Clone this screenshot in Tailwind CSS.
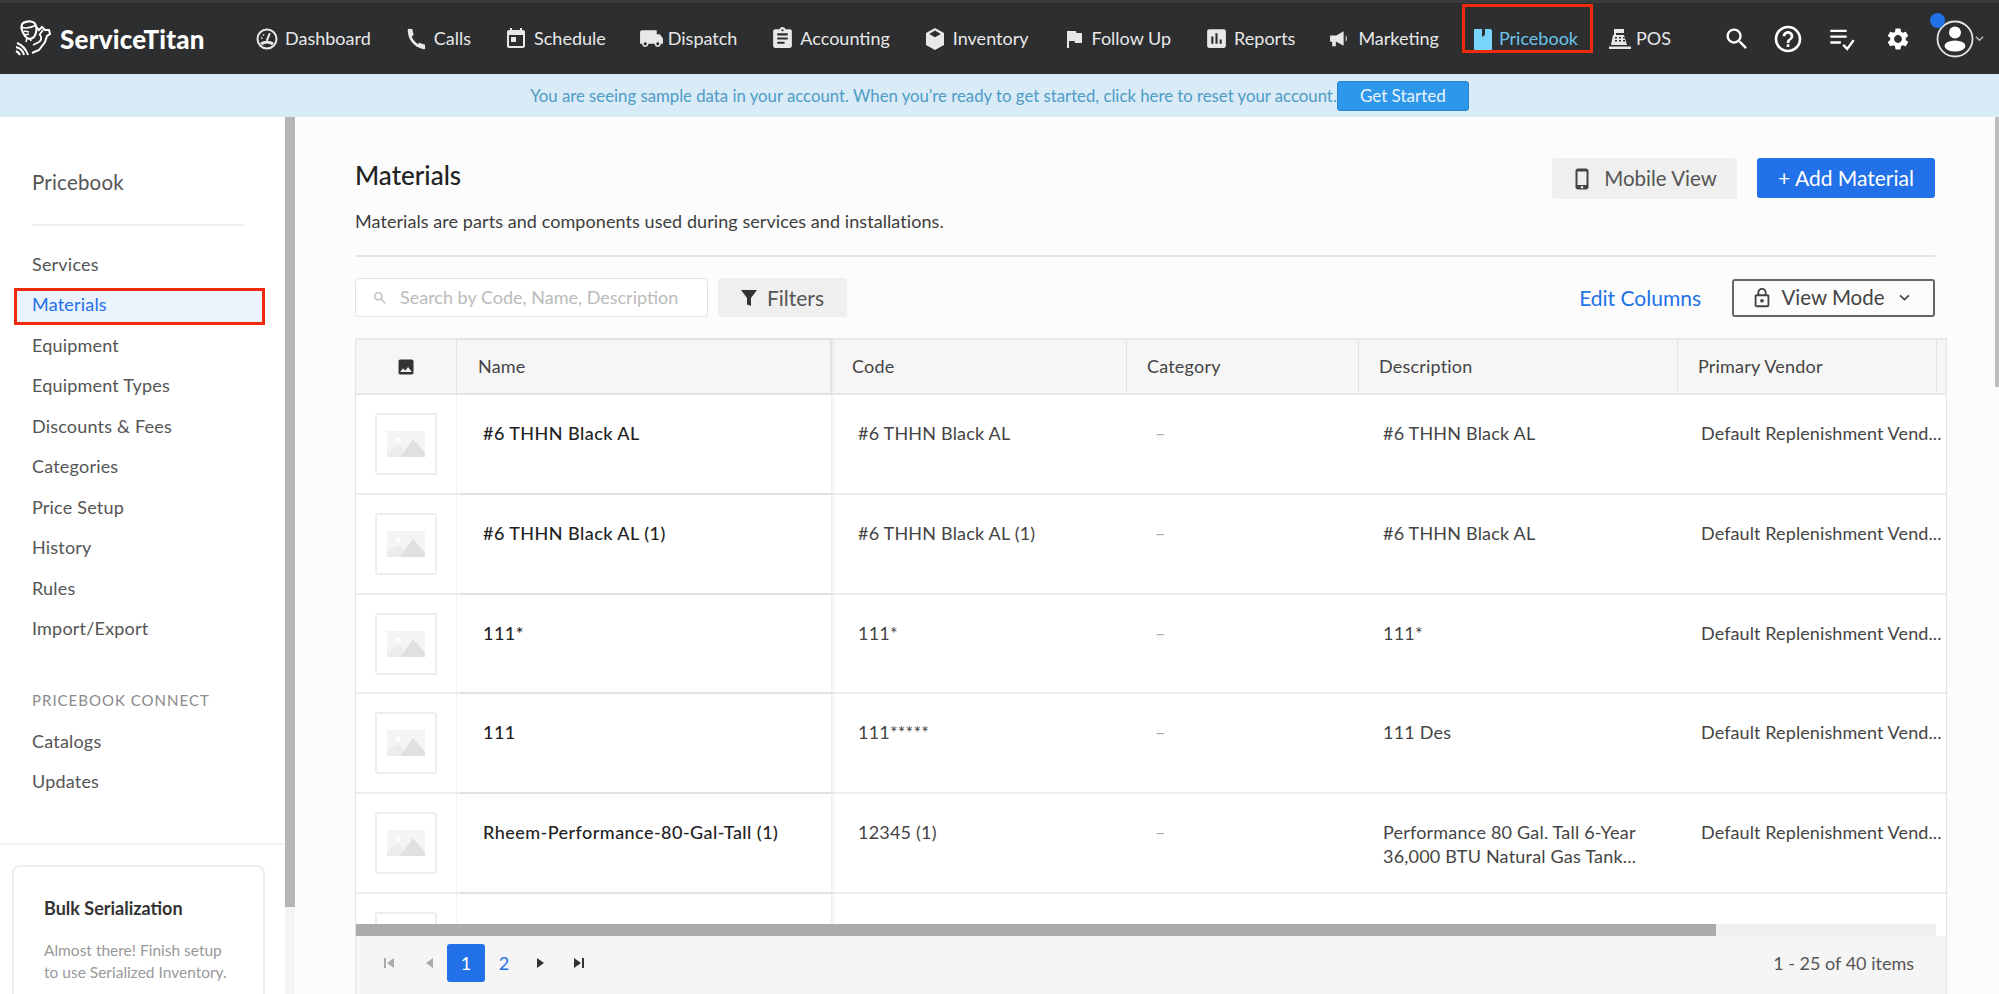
<!DOCTYPE html>
<html lang="en">
<head>
    <meta charset="UTF-8">
    <title>Materials - Pricebook</title>
    <script src="https://cdn.jsdelivr.net/npm/@tailwindcss/browser@4"></script>
</head>
<body class="h-screen overflow-hidden bg-white font-['Lato','Liberation_Sans',sans-serif] text-[#444]">
    <svg class="hidden">
        <symbol id="placeholder" viewBox="0 0 38 26">
            <rect width="38" height="26" fill="#f3f4f4"/>
            <circle cx="11" cy="9" r="2.6" fill="#fff"/>
            <path d="M0 22 10 14l6 4 2 8H0z" fill="#ebecec"/>
            <path d="M13 26 26 8l12 14v4z" fill="#dfe1e1"/>
        </symbol>
    </svg>

    <!-- top nav -->
    <header class="flex h-[74px] items-center border-t-3 border-[#3a3b3d] bg-[#2d2e30] text-[18px] text-[#e8e8e8] shadow-sm">
        <a class="ml-[15px] flex w-[240px] shrink-0 items-center gap-[8px] text-white">
            <svg class="h-[37px] w-[37px]" viewBox="0 0 37 37" fill="none" stroke="#fff" stroke-width="2.200">
                <path d="M8 3c5-3 12-2 13 3 1 3 0 8-2 11-3 3-7 2-9-1-3-4-5-10-2-13z"/>
                <path d="M6 7c5 2 10 1 15-2M9 11l5 1M10 15l4-1M12 18l-1 4M15 18l1 3" stroke-width="1.600"/>
                <path d="m21 7 3 3 3-3 3 3 4 0 1 4-3 2-2 6-6 8-7 3" stroke-width="2"/>
                <path d="M24 14c3 2 3 6 0 8l-6 3M28 10l-3 4" stroke-width="1.800"/>
                <path d="M2 23c5 2 9 6 11 12M1 27c4 1 7 4 8 8M1 31c2 1 3 2 4 4" stroke-width="2"/>
            </svg>
            <span class="text-[26px] leading-none font-black tracking-[0.2px]">ServiceTitan</span>
        </a>
        <nav class="flex items-center gap-[33px]">
            <a class="flex items-center gap-[6px]">
                <svg class="h-[24px] w-[24px]" viewBox="0 0 24 24" fill="none" stroke="currentColor" stroke-width="2"><circle cx="12" cy="12" r="9.5"/><path d="m12 13 2.5-6" stroke-linecap="round"/><path d="M6 17c3.500-2.500 8.500-2.500 12 0" stroke-width="3"/><path d="M6 11h1.500M8 7.500l1 1" stroke-width="1.500"/></svg>
                <span>Dashboard</span>
            </a>
            <a class="flex items-center gap-[6px]">
                <svg class="h-[24px] w-[24px]" viewBox="0 0 24 24" fill="none" stroke="currentColor" stroke-width="2.600" stroke-linecap="round"><path d="M5 3c0 9 6 16 15 18"/><path d="M5 3h2.500l1 4.500L6.500 9.500M20 21v-2.500l-4.500-1.500-2 2" stroke-width="2" fill="currentColor"/></svg>
                <span>Calls</span>
            </a>
            <a class="flex items-center gap-[6px]">
                <svg class="h-[24px] w-[24px]" viewBox="0 0 24 24" fill="currentColor"><path d="M19 3h-1V1h-2v2H8V1H6v2H5c-1.110 0-1.990.9-1.990 2L3 19c0 1.100.89 2 2 2h14c1.100 0 2-.9 2-2V5c0-1.100-.9-2-2-2zm0 16H5V8h14v11zM7 10h5v5H7z"/></svg>
                <span>Schedule</span>
            </a>
            <a class="flex items-center gap-[4px]">
                <svg class="h-[25px] w-[25px]" viewBox="0 0 24 24" fill="currentColor"><path d="M20 8h-3V4H3c-1.100 0-2 .9-2 2v11h2c0 1.660 1.340 3 3 3s3-1.340 3-3h6c0 1.660 1.340 3 3 3s3-1.340 3-3h2v-5l-3-4zM6 18.500c-.83 0-1.500-.67-1.500-1.500s.67-1.500 1.500-1.500 1.500.67 1.500 1.500-.67 1.500-1.500 1.500zm12 0c-.83 0-1.500-.67-1.500-1.500s.67-1.500 1.500-1.500 1.500.67 1.500 1.500-.67 1.500-1.500 1.500z"/></svg>
                <span>Dispatch</span>
            </a>
            <a class="flex items-center gap-[5px]">
                <svg class="h-[25px] w-[25px]" viewBox="0 0 24 24" fill="currentColor"><path d="M19 3h-4.180C14.400 1.840 13.300 1 12 1c-1.300 0-2.400.84-2.820 2H5c-1.100 0-2 .9-2 2v14c0 1.100.9 2 2 2h14c1.100 0 2-.9 2-2V5c0-1.100-.9-2-2-2zm-7 0c.55 0 1 .45 1 1s-.45 1-1 1-1-.45-1-1 .45-1 1-1zm2 14H7v-2h7v2zm3-4H7v-2h10v2zm0-4H7V7h10v2z"/></svg>
                <span>Accounting</span>
            </a>
            <a class="flex items-center gap-[6px]">
                <svg class="h-[24px] w-[24px]" viewBox="0 0 24 24" fill="currentColor"><path d="M12 1 3 6v12l9 5 9-5V6zm0 2.600L17.800 7 12 10.300 6.200 7z"/></svg>
                <span>Inventory</span>
            </a>
            <a class="flex items-center gap-[6px]">
                <svg class="h-[24px] w-[24px]" viewBox="0 0 24 24" fill="currentColor"><path d="M14.400 6 14 4H5v17h2v-7h5.600l.4 2h7V6z"/></svg>
                <span>Follow Up</span>
            </a>
            <a class="flex items-center gap-[5px]">
                <svg class="h-[25px] w-[25px]" viewBox="0 0 24 24" fill="currentColor"><path d="M19 3H5c-1.100 0-2 .9-2 2v14c0 1.100.9 2 2 2h14c1.100 0 2-.9 2-2V5c0-1.100-.9-2-2-2zM9 17H7v-7h2v7zm4 0h-2V7h2v10zm4 0h-2v-4h2v4z"/></svg>
                <span>Reports</span>
            </a>
            <a class="flex items-center gap-[5px]">
                <svg class="h-[25px] w-[25px]" viewBox="0 0 24 24" fill="currentColor"><path d="M2 9h6l7-4v14l-7-4H7.500v4.500H4V15H2z"/><path d="M17 9c1.500 1 1.500 5 0 6z"/></svg>
                <span>Marketing</span>
            </a>
            <a class="relative ml-[2px] flex items-center gap-[7px] text-[#6cc3ea]">
                <svg class="h-[24px] w-[18px]" viewBox="0 0 18 24" fill="#78d4fb"><path d="M1 2h7v8l3-2V2h5c1 0 2 1 2 2v18c0 1-1 1-2 1H2c-1 0-2 0-2-1V3c0-1 0-1 1-1z"/></svg>
                <span>Pricebook</span>
                <div class="absolute top-[-21px] left-[-12px] h-[49px] w-[131px] border-3 border-[#f02a0c]"></div>
            </a>
            <a class="-ml-[3px] flex items-center gap-[4px]">
                <svg class="h-[24px] w-[24px]" viewBox="0 0 24 24" fill="currentColor"><path d="M6 2h10v4H8v2h8l3 10H3L5 8h1zM7 10v1.500h2V10zm4 0v1.500h2V10zm4 0v1.500h2V10zM7 13v1.500h2V13zm4 0v1.500h2V13zm4 0v1.500h2V13zM1 19.500h22V22H1z"/></svg>
                <span>POS</span>
            </a>
        </nav>
        <div class="ml-auto flex items-center pr-[15px] text-white">
            <svg class="h-[28px] w-[28px]" viewBox="0 0 24 24" fill="currentColor"><path d="M15.500 14h-.79l-.28-.27C15.410 12.590 16 11.110 16 9.500 16 5.910 13.090 3 9.500 3S3 5.910 3 9.500 5.910 16 9.500 16c1.610 0 3.090-.59 4.230-1.570l.27.28v.79l5 4.990L20.490 19l-4.990-5zm-6 0C7.010 14 5 11.990 5 9.500S7.010 5 9.500 5 14 7.010 14 9.500 11.990 14 9.500 14z"/></svg>
            <svg class="ml-[21px] h-[32px] w-[32px]" viewBox="0 0 24 24" fill="currentColor"><path d="M11 18h2v-2h-2v2zm1-16C6.480 2 2 6.480 2 12s4.480 10 10 10 10-4.480 10-10S17.520 2 12 2zm0 18c-4.410 0-8-3.590-8-8s3.590-8 8-8 8 3.590 8 8-3.590 8-8 8zm0-14c-2.210 0-4 1.790-4 4h2c0-1.100.9-2 2-2s2 .9 2 2c0 2-3 1.750-3 5h2c0-2.250 3-2.500 3-5 0-2.210-1.790-4-4-4z"/></svg>
            <svg class="ml-[24px] h-[28px] w-[28px]" viewBox="0 0 24 24" fill="none" stroke="currentColor" stroke-width="2"><path d="M2 5h14M2 10h14M2 15h9M13 17l3.500 3.500L22 13"/></svg>
            <svg class="ml-[29px] h-[26px] w-[26px]" viewBox="0 0 24 24" fill="currentColor"><path d="M19.140 12.940c.04-.3.06-.61.06-.94 0-.32-.02-.64-.07-.94l2.030-1.580c.18-.14.23-.41.12-.61l-1.920-3.320c-.12-.22-.37-.29-.59-.22l-2.390.96c-.5-.38-1.030-.7-1.620-.94l-.36-2.540c-.04-.24-.24-.41-.48-.41h-3.840c-.24 0-.43.17-.47.41l-.36 2.540c-.59.24-1.130.57-1.620.94l-2.390-.96c-.22-.08-.47 0-.59.22L2.740 8.870c-.12.21-.08.47.12.61l2.030 1.580c-.05.3-.09.63-.09.94s.02.64.07.94l-2.030 1.580c-.18.14-.23.41-.12.61l1.920 3.320c.12.22.37.29.59.22l2.390-.96c.5.38 1.030.7 1.620.94l.36 2.540c.05.24.24.41.48.41h3.840c.24 0 .44-.17.47-.41l.36-2.540c.59-.24 1.130-.56 1.620-.94l2.390.96c.22.08.47 0 .59-.22l1.920-3.320c.12-.22.07-.47-.12-.61l-2.010-1.580zM12 15.600c-1.980 0-3.600-1.620-3.600-3.600s1.620-3.600 3.600-3.600 3.600 1.620 3.600 3.600-1.620 3.600-3.600 3.600z"/></svg>
            <div class="relative ml-[25px] flex items-center">
                <svg class="h-[38px] w-[38px]" viewBox="0 0 38 38"><circle cx="19" cy="19" r="17.500" fill="none" stroke="#e4e4e4" stroke-width="1.800"/><circle cx="19" cy="12.500" r="6" fill="#fff"/><ellipse cx="19" cy="26" rx="10.500" ry="5.500" fill="#fff"/></svg>
                <div class="absolute top-[-7px] left-[-6px] h-[15px] w-[15px] rounded-full bg-[#2270e8]"></div>
                <svg class="ml-[1px] h-[9px] w-[9px]" viewBox="0 0 10 10" fill="none" stroke="#bbb" stroke-width="1.500"><path d="m1 3 4 4 4-4"/></svg>
            </div>
        </div>
    </header>

    <!-- sample data banner -->
    <div class="flex h-[43px] items-center justify-center bg-[#d9ebf6] text-[16.750px] text-[#4d9cc6]">
        <span>You are seeing sample data in your account. When you're ready to get started, click here to reset your account.</span>
        <button class="h-[30px] w-[132px] rounded-[3px] border border-[#2b83c9] bg-[#2f97ea] text-[17px] text-[#e8f4fd]">Get Started</button>
    </div>

    <div class="flex h-[877px]">
        <!-- left sidebar -->
        <aside class="flex w-[285px] shrink-0 flex-col overflow-hidden bg-white text-[18px] tracking-[0.2px] text-[#555]">
            <div class="mx-8 h-[109px] w-[212px] shrink-0 border-b-2 border-[#eee] pt-[52px] text-[20.500px] leading-[26px]">Pricebook</div>
            <div class="mt-[18px] flex shrink-0 flex-col">
                <a class="flex h-[40.500px] items-center pl-8">Services</a>
                <a class="mt-[3px] ml-[14px] flex h-[37.500px] w-[251px] items-center border-3 border-[#f02a0c] bg-[#eaf2fc] pb-[3px] pl-[15px] text-[#2271e8]">Materials</a>
                <a class="flex h-[40.500px] items-center pl-8">Equipment</a>
                <a class="flex h-[40.500px] items-center pl-8">Equipment Types</a>
                <a class="flex h-[40.500px] items-center pl-8">Discounts &amp; Fees</a>
                <a class="flex h-[40.500px] items-center pl-8">Categories</a>
                <a class="flex h-[40.500px] items-center pl-8">Price Setup</a>
                <a class="flex h-[40.500px] items-center pl-8">History</a>
                <a class="flex h-[40.500px] items-center pl-8">Rules</a>
                <a class="flex h-[40.500px] items-center pl-8">Import/Export</a>
            </div>
            <div class="mt-[41px] shrink-0 pl-8 text-[15px] leading-5 tracking-[1px] text-[#8a8a8a]">PRICEBOOK CONNECT</div>
            <div class="mt-[11px] flex shrink-0 flex-col">
                <a class="flex h-[40.500px] items-center pl-8">Catalogs</a>
                <a class="flex h-[40.500px] items-center pl-8">Updates</a>
            </div>
            <div class="mt-[41px] shrink-0 border-t-2 border-[#f1f1f1] pt-[20px] pl-[12px]">
                <div class="h-[160px] w-[253px] rounded-[8px] border-2 border-[#eee] px-[30px] pt-[28px]">
                    <div class="text-[18px] leading-[26px] font-bold tracking-normal text-[#333]">Bulk Serialization</div>
                    <div class="mt-[18px] text-[15.500px] leading-[22px] tracking-normal whitespace-nowrap text-[#999]">Almost there! Finish setup<br>to use Serialized Inventory.</div>
                </div>
            </div>
        </aside>
        <div class="w-[10px] shrink-0 bg-[#f5f5f5]">
            <div class="h-[790px] bg-[#b6b6b6]"></div>
        </div>
        <div class="w-[2px] shrink-0 bg-white"></div>

        <!-- main -->
        <main class="relative min-w-0 flex-1 bg-[#fcfcfc] pt-[41px] pl-[58px]">
            <div class="flex w-[1580px] items-start justify-between">
                <div>
                    <h1 class="text-[26px] leading-[34px] font-medium text-[#222]">Materials</h1>
                    <p class="mt-[19px] text-[18px] leading-5 tracking-[0.07px] text-[#3d3d3d]">Materials are parts and components used during services and installations.</p>
                </div>
                <div class="flex gap-5">
                    <button class="flex h-[41px] w-[185px] items-center justify-center gap-[10px] rounded-[3px] bg-[#efefef] pr-[2px] text-[20.500px] text-[#555]">
                        <svg class="h-[24px] w-[24px]" viewBox="0 0 24 24" fill="#444"><path d="M16 1.500H8c-1.400 0-2.500 1.100-2.500 2.500v16c0 1.400 1.100 2.500 2.500 2.500h8c1.400 0 2.500-1.100 2.500-2.500V4c0-1.400-1.100-2.500-2.500-2.500zM12 21.500c-.8 0-1.300-.6-1.300-1.200s.5-1.300 1.300-1.300 1.300.6 1.300 1.300-.5 1.200-1.300 1.200zm4.500-3.500h-9V4.500h9z"/></svg>
                        Mobile View
                    </button>
                    <button class="h-[40px] w-[178px] rounded-[3px] bg-[#2271e8] text-[21px] text-white">+ Add Material</button>
                </div>
            </div>
            <div class="mt-[24px] h-[2px] w-[1580px] bg-[#e6e6e6]"></div>

            <div class="mt-[21px] flex h-[39px] w-[1580px] items-center">
                <div class="flex h-[39px] w-[353px] items-center rounded-[3px] border border-[#e4e4e4] bg-white pl-[16px] text-[18px] text-[#bbb]">
                    <svg class="h-[16px] w-[16px]" viewBox="0 0 24 24" fill="#bbb"><path d="M15.500 14h-.79l-.28-.27C15.410 12.590 16 11.110 16 9.500 16 5.910 13.090 3 9.500 3S3 5.910 3 9.500 5.910 16 9.500 16c1.610 0 3.090-.59 4.230-1.570l.27.28v.79l5 4.990L20.490 19l-4.990-5zm-6 0C7.010 14 5 11.990 5 9.500S7.010 5 9.500 5 14 7.010 14 9.500 11.990 14 9.500 14z"/></svg>
                    <span class="ml-[12px] whitespace-nowrap">Search by Code, Name, Description</span>
                </div>
                <button class="ml-[10px] flex h-[39px] w-[129px] items-center justify-center gap-[10px] rounded-[3px] bg-[#efefef] text-[21px] text-[#555]">
                    <svg class="h-[18px] w-[16px]" viewBox="0 0 16 18" fill="#333"><path d="M0 1h16L10 9v8l-4-1.500V9z"/></svg>
                    Filters
                </button>
                <a class="mr-[31px] ml-auto text-[21px] text-[#2271e8]">Edit Columns</a>
                <button class="flex h-[38px] w-[203px] items-center justify-center gap-[8px] rounded-[3px] border-2 border-[#666] pr-[6px] text-[20.500px] text-[#444]">
                    <svg class="h-[22px] w-[22px]" viewBox="0 0 24 24" fill="#444"><path d="M18 8h-1V6c0-2.800-2.200-5-5-5S7 3.200 7 6v2H6c-1.100 0-2 .9-2 2v10c0 1.100.9 2 2 2h12c1.100 0 2-.9 2-2V10c0-1.100-.9-2-2-2zM9 6c0-1.700 1.300-3 3-3s3 1.300 3 3v2H9zm9 14H6V10h12zm-6-3c1.100 0 2-.9 2-2s-.9-2-2-2-2 .9-2 2 .9 2 2 2z"/></svg>
                    View Mode
                    <svg class="ml-[6px] h-[11px] w-[11px]" viewBox="0 0 10 10" fill="none" stroke="#444" stroke-width="1.500"><path d="m1 3 4 4 4-4"/></svg>
                </button>
            </div>

            <!-- materials table -->
            <div class="mt-[21px] w-[1592px] border-x border-[#e5e5e5] text-[18px] tracking-[0.2px] text-[#444]">
                <div class="grid h-[57px] grid-cols-[101px_374px_296px_232px_319px_259px_8px] items-center border-y-2 border-[#e8e8e8] bg-[#f6f6f6]">
                    <div class="flex h-full items-center justify-center border-r border-[#e4e4e4]">
                        <svg class="h-[20px] w-[20px]" viewBox="0 0 24 24" fill="#333"><path d="M21 19V5c0-1.100-.9-2-2-2H5c-1.100 0-2 .9-2 2v14c0 1.100.9 2 2 2h14c1.100 0 2-.9 2-2zM8.500 13.500l2.500 3.010L14.500 12l4.500 6H5l3.500-4.500z"/></svg>
                    </div>
                    <div class="flex h-full items-center border-r border-[#ddd] pl-[21px] shadow-[2px_0_3px_rgba(0,0,0,0.08)]">Name</div>
                    <div class="flex h-full items-center border-r border-[#e4e4e4] pl-[21px]">Code</div>
                    <div class="flex h-full items-center border-r border-[#e4e4e4] pl-[20px]">Category</div>
                    <div class="flex h-full items-center border-r border-[#e4e4e4] pl-[20px]">Description</div>
                    <div class="flex h-full items-center border-r border-[#e4e4e4] pl-[20px]">Primary Vendor</div>
                    <div></div>
                </div>
                <div class="relative h-[541px] overflow-hidden bg-white leading-6">
                    <div class="grid h-[99.800px] grid-cols-[101px_374px_296px_232px_319px_270px] border-b-2 border-[#ececec]">
                        <div class="border-r border-[#f4f4f4] pt-[18px] pl-[19px]"><div class="flex h-[62px] w-[62px] items-center justify-center rounded-[3px] border-2 border-[#eee]"><svg class="h-[26px] w-[38px]"><use href="#placeholder"/></svg></div></div>
                        <div class="pt-[26px] pl-[26px] font-medium tracking-[0.45px] text-[#222] shadow-[2px_0_3px_rgba(0,0,0,0.08)]">#6 THHN Black AL</div>
                        <div class="pt-[26px] pl-[27px]">#6 THHN Black AL</div>
                        <div class="pt-[26px] pl-[28px] text-[#aaa]">–</div>
                        <div class="pt-[26px] pl-[24px]">#6 THHN Black AL</div>
                        <div class="pt-[26px] pl-[23px] tracking-[0.1px] whitespace-nowrap">Default Replenishment Vend...</div>
                    </div>
                    <div class="grid h-[99.800px] grid-cols-[101px_374px_296px_232px_319px_270px] border-b-2 border-[#ececec]">
                        <div class="border-r border-[#f4f4f4] pt-[18px] pl-[19px]"><div class="flex h-[62px] w-[62px] items-center justify-center rounded-[3px] border-2 border-[#eee]"><svg class="h-[26px] w-[38px]"><use href="#placeholder"/></svg></div></div>
                        <div class="pt-[26px] pl-[26px] font-medium tracking-[0.45px] text-[#222] shadow-[2px_0_3px_rgba(0,0,0,0.08)]">#6 THHN Black AL (1)</div>
                        <div class="pt-[26px] pl-[27px]">#6 THHN Black AL (1)</div>
                        <div class="pt-[26px] pl-[28px] text-[#aaa]">–</div>
                        <div class="pt-[26px] pl-[24px]">#6 THHN Black AL</div>
                        <div class="pt-[26px] pl-[23px] tracking-[0.1px] whitespace-nowrap">Default Replenishment Vend...</div>
                    </div>
                    <div class="grid h-[99.800px] grid-cols-[101px_374px_296px_232px_319px_270px] border-b-2 border-[#ececec]">
                        <div class="border-r border-[#f4f4f4] pt-[18px] pl-[19px]"><div class="flex h-[62px] w-[62px] items-center justify-center rounded-[3px] border-2 border-[#eee]"><svg class="h-[26px] w-[38px]"><use href="#placeholder"/></svg></div></div>
                        <div class="pt-[26px] pl-[26px] font-medium tracking-[0.45px] text-[#222] shadow-[2px_0_3px_rgba(0,0,0,0.08)]">111*</div>
                        <div class="pt-[26px] pl-[27px]">111*</div>
                        <div class="pt-[26px] pl-[28px] text-[#aaa]">–</div>
                        <div class="pt-[26px] pl-[24px]">111*</div>
                        <div class="pt-[26px] pl-[23px] tracking-[0.1px] whitespace-nowrap">Default Replenishment Vend...</div>
                    </div>
                    <div class="grid h-[99.800px] grid-cols-[101px_374px_296px_232px_319px_270px] border-b-2 border-[#ececec]">
                        <div class="border-r border-[#f4f4f4] pt-[18px] pl-[19px]"><div class="flex h-[62px] w-[62px] items-center justify-center rounded-[3px] border-2 border-[#eee]"><svg class="h-[26px] w-[38px]"><use href="#placeholder"/></svg></div></div>
                        <div class="pt-[26px] pl-[26px] font-medium tracking-[0.45px] text-[#222] shadow-[2px_0_3px_rgba(0,0,0,0.08)]">111</div>
                        <div class="pt-[26px] pl-[27px]">111*****</div>
                        <div class="pt-[26px] pl-[28px] text-[#aaa]">–</div>
                        <div class="pt-[26px] pl-[24px]">111 Des</div>
                        <div class="pt-[26px] pl-[23px] tracking-[0.1px] whitespace-nowrap">Default Replenishment Vend...</div>
                    </div>
                    <div class="grid h-[99.800px] grid-cols-[101px_374px_296px_232px_319px_270px] border-b-2 border-[#ececec]">
                        <div class="border-r border-[#f4f4f4] pt-[18px] pl-[19px]"><div class="flex h-[62px] w-[62px] items-center justify-center rounded-[3px] border-2 border-[#eee]"><svg class="h-[26px] w-[38px]"><use href="#placeholder"/></svg></div></div>
                        <div class="pt-[26px] pl-[26px] font-medium tracking-[0.45px] text-[#222] shadow-[2px_0_3px_rgba(0,0,0,0.08)]">Rheem-Performance-80-Gal-Tall (1)</div>
                        <div class="pt-[26px] pl-[27px]">12345 (1)</div>
                        <div class="pt-[26px] pl-[28px] text-[#aaa]">–</div>
                        <div class="pt-[26px] pl-[24px]">Performance 80 Gal. Tall 6-Year<br>36,000 BTU Natural Gas Tank...</div>
                        <div class="pt-[26px] pl-[23px] tracking-[0.1px] whitespace-nowrap">Default Replenishment Vend...</div>
                    </div>
                    <div class="grid h-[99.800px] grid-cols-[101px_374px_296px_232px_319px_270px]">
                        <div class="border-r border-[#f4f4f4] pt-[18px] pl-[19px]"><div class="flex h-[62px] w-[62px] items-center justify-center rounded-[3px] border-2 border-[#eee]"><svg class="h-[26px] w-[38px]"><use href="#placeholder"/></svg></div></div>
                        <div class="pt-[26px] pl-[26px] font-medium tracking-[0.45px] text-[#222] shadow-[2px_0_3px_rgba(0,0,0,0.08)]">Rheem-Performance-40-Gal-Tall</div>
                        <div class="pt-[26px] pl-[27px]">10042 (1)</div>
                        <div class="pt-[26px] pl-[28px] text-[#aaa]">–</div>
                        <div class="pt-[26px] pl-[24px]">Performance 40 Gal. Tall 6-Year</div>
                        <div class="pt-[26px] pl-[23px] tracking-[0.1px] whitespace-nowrap">Default Replenishment Vend...</div>
                    </div>
                    <!-- horizontal scrollbar sits over the last row -->
                    <div class="absolute bottom-0 left-0 h-[12px] w-[1580px] bg-[#f0f0f0]">
                        <div class="h-full w-[1360px] bg-[#ababab]"></div>
                    </div>
                </div>
                <div class="flex h-[58px] items-center justify-between bg-[#f5f5f5] pr-[32px] pb-[4px] pl-[27px] text-[18px] tracking-normal text-[#555]">
                    <div class="flex items-center">
                        <svg class="h-[12px] w-[12px]" viewBox="0 0 12 12" fill="#aaa"><path d="M1 1h2v10H1zM11 1v10L4 6z"/></svg>
                        <svg class="ml-[28px] h-[12px] w-[12px]" viewBox="0 0 12 12" fill="#aaa"><path d="M10 1v10L3 6z"/></svg>
                        <div class="ml-[12px] flex h-[38px] w-[38px] items-center justify-center rounded-[3px] bg-[#2271e8] text-white">1</div>
                        <div class="flex h-[38px] w-[38px] items-center justify-center text-[#2271e8]">2</div>
                        <svg class="ml-[12px] h-[12px] w-[12px]" viewBox="0 0 12 12" fill="#333"><path d="M2 1v10l7-5z"/></svg>
                        <svg class="ml-[26px] h-[12px] w-[12px]" viewBox="0 0 12 12" fill="#333"><path d="M1 1v10l7-5zM9 1h2v10H9z"/></svg>
                    </div>
                    <span>1 - 25 of 40 items</span>
                </div>
            </div>

            <!-- page scrollbar -->
            <div class="absolute top-0 right-0 h-[270px] w-[4px] bg-[#bdbdbd]"></div>
        </main>
    </div>
</body>
</html>
